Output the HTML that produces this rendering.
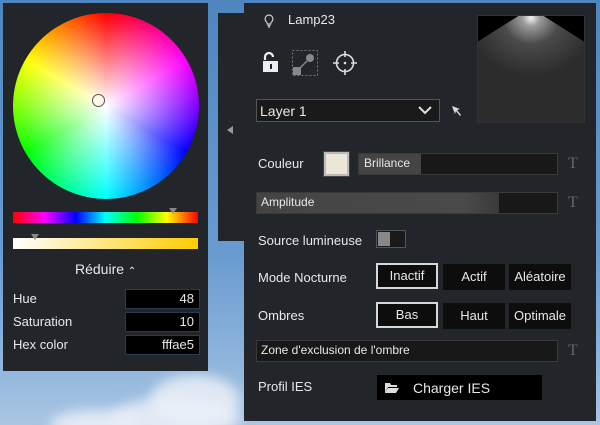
<!DOCTYPE html>
<html><head><style>
*{margin:0;padding:0;box-sizing:border-box}
html,body{width:600px;height:425px;overflow:hidden}
body{position:relative;font-family:"Liberation Sans",sans-serif;font-size:13px;color:#e8e8e8;
background:linear-gradient(180deg,#4f86c0 0%,#6a9bd0 60%,#8fb5dc 85%,#a9c5e2 100%)}
.cloud{position:absolute;border-radius:50%;background:rgba(235,240,248,.85);filter:blur(6px)}
.p{position:absolute;background:#22262b}
.abs{position:absolute}
.lbl{position:absolute;font-size:13px}
.inp{position:absolute;left:122px;width:75px;height:20px;background:#000;border:1px solid #2b3c52;text-align:right;padding-right:5px;line-height:18px;font-size:13px}
.btn{position:absolute;width:62px;height:26px;background:#0d0d0d;text-align:center;line-height:26px;font-size:13px}
.sel{border:2px solid #d8d8d8;line-height:22px}
.T{position:absolute;font-family:"Liberation Serif",serif;font-size:16px;color:#666}
</style></head><body>
<div class="cloud" style="left:150px;top:375px;width:90px;height:50px"></div>
<div class="cloud" style="left:110px;top:398px;width:130px;height:40px"></div>
<div class="cloud" style="left:50px;top:410px;width:90px;height:30px"></div>

<!-- left panel -->
<div class="p" style="left:3px;top:3px;width:205px;height:368px">
  <div class="abs" style="left:10px;top:10px;width:186px;height:186px;border-radius:50%;background:conic-gradient(#f00,#f0f 60deg,#00f 120deg,#0ff 180deg,#0f0 240deg,#ff0 300deg,#f00)"></div>
  <div class="abs" style="left:10px;top:10px;width:186px;height:186px;border-radius:50%;background:radial-gradient(circle,#fff 0%,rgba(255,255,255,0) 70%)"></div>
  <div class="abs" style="left:89px;top:91px;width:13px;height:13px;border-radius:50%;border:1px solid #555;background:#fff8e8"></div>
  <div class="abs" style="left:10px;top:209px;width:185px;height:11px;background:linear-gradient(90deg,#f00,#f0f 17%,#00f 34%,#0ff 50%,#0f0 67%,#ff0 83%,#f00)"></div>
  <div class="abs" style="left:166px;top:205px;width:0;height:0;border-left:4px solid transparent;border-right:4px solid transparent;border-top:6px solid #888"></div>
  <div class="abs" style="left:10px;top:235px;width:185px;height:11px;background:linear-gradient(90deg,#fff,#ffcc00)"></div>
  <div class="abs" style="left:28px;top:231px;width:0;height:0;border-left:4px solid transparent;border-right:4px solid transparent;border-top:6px solid #888"></div>
  <div class="lbl" style="left:72px;top:258px;font-size:14px">Réduire <span style="font-size:10px">&#8963;</span></div>
  <div class="lbl" style="left:10px;top:288px">Hue</div>
  <div class="lbl" style="left:10px;top:311px">Saturation</div>
  <div class="lbl" style="left:10px;top:334px">Hex color</div>
  <div class="inp" style="top:286px">48</div>
  <div class="inp" style="top:309px">10</div>
  <div class="inp" style="top:332px">fffae5</div>
</div>

<!-- back panel -->
<div class="p" style="left:218px;top:13px;width:40px;height:228px"></div>
<div class="abs" style="left:227px;top:126px;width:0;height:0;border-top:4px solid transparent;border-bottom:4px solid transparent;border-right:6px solid #999"></div>

<!-- main panel -->
<div class="p" style="left:244px;top:3px;width:352px;height:418px">
  <svg class="abs" style="left:20px;top:11px" width="10" height="14" viewBox="0 0 10 14"><path d="M5 1a4 4 0 0 0-2.5 7c.5.5.8 1 .8 2h3.4c0-1 .3-1.5.8-2A4 4 0 0 0 5 1zM3.5 11.5h3M4 13h2" fill="none" stroke="#ccc" stroke-width="1.2"/></svg>
  <div class="lbl" style="left:44px;top:9px">Lamp23</div>
  <svg class="abs" style="left:17px;top:48px" width="20" height="22" viewBox="0 0 20 22"><path d="M4 9V6a4 4 0 0 1 8 0" fill="none" stroke="#eee" stroke-width="2.2"/><rect x="2" y="10" width="15" height="11" fill="#eee"/><rect x="9" y="13" width="2" height="5" fill="#222"/></svg>
  <svg class="abs" style="left:47px;top:46px" width="28" height="28" viewBox="0 0 28 28"><rect x="1.5" y="1.5" width="25" height="25" fill="none" stroke="#777" stroke-dasharray="2 2"/><circle cx="19" cy="9" r="4" fill="#888"/><rect x="2" y="18" width="8" height="8" fill="#888"/><path d="M9 19l7-7" stroke="#888" stroke-width="1.5"/></svg>
  <svg class="abs" style="left:88px;top:47px" width="26" height="26" viewBox="0 0 26 26"><circle cx="13" cy="13" r="8.5" fill="none" stroke="#ddd" stroke-width="1.6"/><path d="M13 1v6M13 19v6M1 13h6M19 13h6" stroke="#ddd" stroke-width="1.6"/><circle cx="13" cy="13" r="1.3" fill="#ddd"/></svg>
  <div class="abs" style="left:12px;top:96px;width:184px;height:23px;background:#1a1a1a;border:1px solid #555"></div>
  <div class="lbl" style="left:16px;top:100px;font-size:14px">Layer 1</div>
  <svg class="abs" style="left:173px;top:102px" width="16" height="10" viewBox="0 0 16 10"><path d="M2 2l6 6 6-6" fill="none" stroke="#ddd" stroke-width="2"/></svg>
  <svg class="abs" style="left:206px;top:101px" width="14" height="14" viewBox="0 0 14 14"><path d="M2 2l8 3-3 1 4 5-1 1-4-5-1 3z" fill="#ddd"/></svg>
  <div class="abs" style="left:233px;top:12px;width:108px;height:108px;background:#000;border:1px solid #333;overflow:hidden">
    <div class="abs" style="left:0;top:0;width:106px;height:106px;clip-path:polygon(38% 0,62% 0,100% 24%,100% 100%,0 100%,0 24%);background:radial-gradient(ellipse 60% 55% at 50% 2%,#f4f4f4 0%,#9a9a9a 14%,#4a4a4a 45%,#2c2c2c 100%)"></div>
  </div>
  <div class="lbl" style="left:14px;top:153px">Couleur</div>
  <div class="abs" style="left:80px;top:149px;width:25px;height:24px;background:#ece6d8;border:2px solid #bbb;outline:1px solid #444"></div>
  <div class="abs" style="left:114px;top:150px;width:200px;height:22px;background:#181818;border:1px solid #3a3a3a"></div>
  <div class="abs" style="left:115px;top:151px;width:62px;height:20px;background:#444"></div>
  <div class="lbl" style="left:120px;top:153px;font-size:12px">Brillance</div>
  <div class="T" style="left:324px;top:152px">T</div>
  <div class="abs" style="left:12px;top:189px;width:302px;height:22px;background:#181818;border:1px solid #3a3a3a"></div>
  <div class="abs" style="left:13px;top:190px;width:242px;height:20px;background:linear-gradient(90deg,#444,#4a4a4a 85%,#3a3a3a)"></div>
  <div class="lbl" style="left:17px;top:192px;font-size:12px">Amplitude</div>
  <div class="T" style="left:324px;top:191px">T</div>
  <div class="lbl" style="left:14px;top:230px">Source lumineuse</div>
  <div class="abs" style="left:132px;top:227px;width:30px;height:18px;border:1px solid #555;background:#1a1a1a"></div>
  <div class="abs" style="left:134px;top:229px;width:12px;height:14px;background:#888"></div>
  <div class="lbl" style="left:14px;top:267px">Mode Nocturne</div>
  <div class="btn sel" style="left:132px;top:260px">Inactif</div>
  <div class="btn" style="left:199px;top:261px">Actif</div>
  <div class="btn" style="left:265px;top:261px">Aléatoire</div>
  <div class="lbl" style="left:14px;top:305px">Ombres</div>
  <div class="btn sel" style="left:132px;top:299px">Bas</div>
  <div class="btn" style="left:199px;top:300px">Haut</div>
  <div class="btn" style="left:265px;top:300px">Optimale</div>
  <div class="abs" style="left:12px;top:337px;width:302px;height:22px;background:#181818;border:1px solid #3a3a3a"></div>
  <div class="lbl" style="left:17px;top:340px;font-size:12px">Zone d'exclusion de l'ombre</div>
  <div class="T" style="left:324px;top:339px">T</div>
  <div class="lbl" style="left:14px;top:376px">Profil IES</div>
  <div class="abs" style="left:133px;top:372px;width:165px;height:25px;background:#000"></div>
  <svg class="abs" style="left:140px;top:379px" width="16" height="12" viewBox="0 0 16 12"><path d="M1 1h5l1 2h6v2H4L1 11z" fill="#ddd"/><path d="M4 6h11l-3 5H1z" fill="#ddd"/></svg>
  <div class="lbl" style="left:169px;top:377px;font-size:14px">Charger IES</div>
</div>
</body></html>
